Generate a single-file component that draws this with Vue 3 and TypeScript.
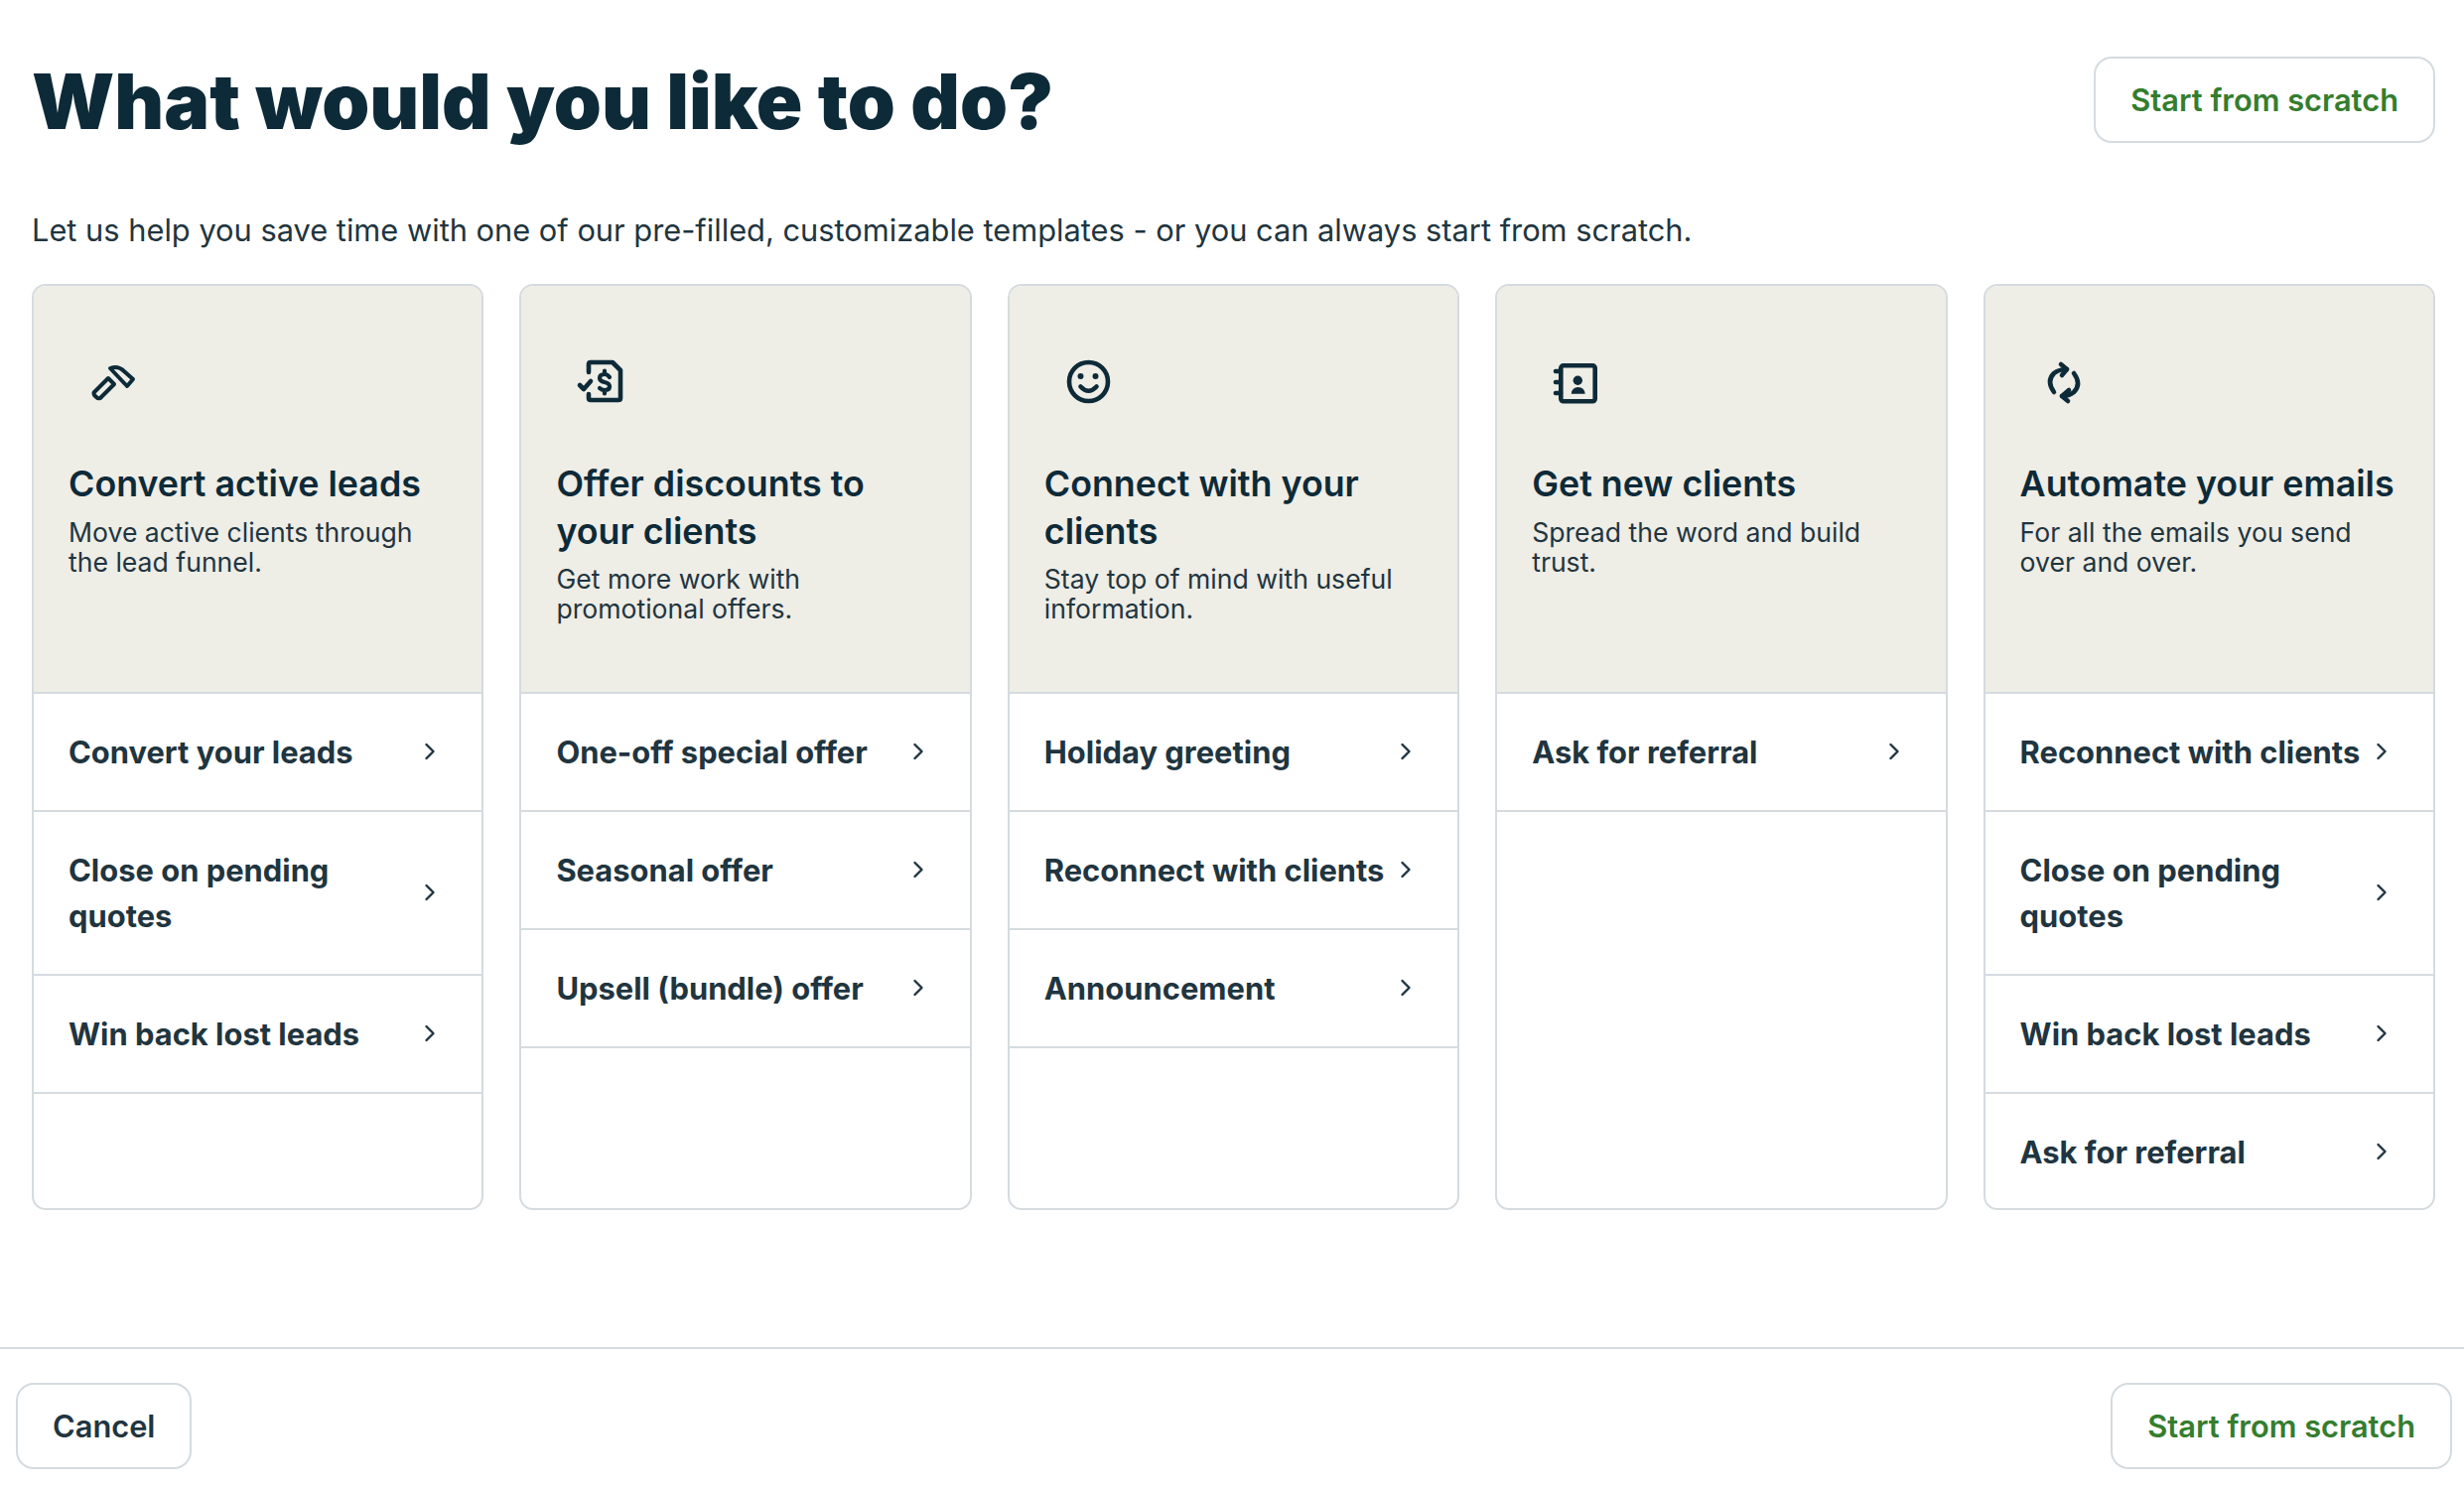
<script setup lang="ts">
interface Card {
  title: string
  sub: string
  icon: string
  items: string[]
}
const cards: Card[] = [
  { title: 'Convert active leads', sub: 'Move active clients through the lead funnel.', icon: 'hammer', items: ['Convert your leads', 'Close on pending quotes', 'Win back lost leads'] },
  { title: 'Offer discounts to your clients', sub: 'Get more work with promotional offers.', icon: 'doc', items: ['One-off special offer', 'Seasonal offer', 'Upsell (bundle) offer'] },
  { title: 'Connect with your clients', sub: 'Stay top of mind with useful information.', icon: 'smile', items: ['Holiday greeting', 'Reconnect with clients', 'Announcement'] },
  { title: 'Get new clients', sub: 'Spread the word and build trust.', icon: 'contact', items: ['Ask for referral'] },
  { title: 'Automate your emails', sub: 'For all the emails you send over and over.', icon: 'sync', items: ['Reconnect with clients', 'Close on pending quotes', 'Win back lost leads', 'Ask for referral'] },
]
</script>

<template>
  <div class="page">
    <main class="main">
      <header class="top">
        <h1>What would you like to do?</h1>
        <button class="btn green">Start from scratch</button>
      </header>
      <p class="intro">Let us help you save time with one of our pre-filled, customizable templates - or you can always start from scratch.</p>
      <div class="cards">
        <section v-for="card in cards" :key="card.title" class="card">
          <div class="head">
            <svg class="icon" viewBox="0 0 86 86" fill="none" stroke="#0d2a38" stroke-width="4.6" stroke-linecap="round" stroke-linejoin="round">
              <g v-if="card.icon === 'hammer'">
                <path d="M25 51 L39 37 L45 43 L31 57 Q29 58 27 56 L25 54 Q24 52 25 51 Z" stroke-width="4" />
                <path d="M41 27 Q49 24 55 30 L64 38 L58 45 Z" stroke-width="4" />
              </g>
              <g v-else-if="card.icon === 'doc'">
                <path d="M32 31 V23 Q32 21 34 21 H56 L64 29 V57 Q64 59 62 59 H34 Q32 59 32 57 V53" />
                <path d="M23 44 L27 48 L34 40" />
                <path d="M53 36 Q51 33 48 33 Q43 33 43 37 Q43 40 48 41 Q53 42 53 45.5 Q53 49 48 49 Q45 49 43 47 M48 29.5 V33 M48 49 V52.5" stroke-width="4.2" />
              </g>
              <g v-else-if="card.icon === 'smile'">
                <circle cx="43.5" cy="40.5" r="19.5" />
                <path d="M35.5 45.5 Q43.5 54 51.5 45.5" />
                <circle cx="35.5" cy="35" r="3" fill="#0d2a38" stroke="none" />
                <circle cx="50.5" cy="35" r="3" fill="#0d2a38" stroke="none" />
              </g>
              <g v-else-if="card.icon === 'contact'">
                <rect x="28.3" y="24.3" width="34.4" height="36" rx="2.5" />
                <path d="M23 30 H28 M23 41 H28 M23 52 H28" />
                <circle cx="45.3" cy="39.3" r="4.7" fill="#0d2a38" stroke="none" />
                <path d="M38.7 52.7 Q39.5 46 45.7 46 Q51.9 46 52.7 52.7 Z" fill="#0d2a38" stroke="none" />
              </g>
              <g v-else>
                <path d="M33 51 Q25 40 33 32 Q38 28 46 28" />
                <path d="M40 23 L46 28 L41 34" />
                <path d="M53 32 Q61 43 53 51 Q48 55 41 55" />
                <path d="M48 49 L41 55 L47 60" />
              </g>
            </svg>
            <h2>{{ card.title }}</h2>
            <p>{{ card.sub }}</p>
          </div>
          <ul class="rows">
            <li v-for="item in card.items" :key="item" class="row">
              <span>{{ item }}</span>
              <svg class="chev" viewBox="0 0 12 18" fill="none" stroke="#1f3540" stroke-width="2.4" stroke-linecap="round" stroke-linejoin="round"><path d="M2.5 2 L9.5 9 L2.5 16" /></svg>
            </li>
          </ul>
        </section>
      </div>
    </main>
    <footer class="foot">
      <button class="btn dark">Cancel</button>
      <button class="btn green">Start from scratch</button>
    </footer>
  </div>
</template>

<style scoped>
.page {
  width: 2482px;
  height: 1502px;
  display: flex;
  flex-direction: column;
  font-family: Inter, "Liberation Sans", sans-serif;
  color: #1f3540;
  background: #fff;
  overflow: hidden;
}
.main {
  flex: 1;
  padding: 57px 29px 0 32px;
}
.top {
  display: flex;
  justify-content: space-between;
  align-items: center;
  height: 87px;
}
h1 {
  margin: 0;
  padding-top: 3px;
  font-family: Inter, sans-serif;
  font-weight: 900;
  font-size: 77px;
  line-height: 87px;
  color: #0d2a38;
}
.intro {
  margin: 64px 0 0;
  font-size: 30.8px;
  line-height: 48px;
}
.cards {
  margin-top: 30px;
  display: grid;
  grid-template-columns: repeat(5, 1fr);
  gap: 36px;
}
.card {
  height: 933px;
  box-sizing: border-box;
  border: 2px solid #d5dbdf;
  border-radius: 14px;
  overflow: hidden;
}
.head {
  height: 411px;
  box-sizing: border-box;
  background: #eeede6;
  padding: 56px 35px 0;
  border-bottom: 2px solid #d5dbdf;
}
.icon {
  display: block;
  width: 86px;
  height: 86px;
  margin-left: 1px;
}
h2 {
  margin: 34px 0 0;
  font-size: 35.8px;
  line-height: 47.5px;
  font-weight: 600;
  color: #0d2a38;
}
.head p {
  margin: 9px 0 0;
  font-size: 26.6px;
  line-height: 30px;
}
.rows {
  list-style: none;
  margin: 0;
  padding: 0;
}
.row {
  box-sizing: border-box;
  display: flex;
  align-items: center;
  justify-content: space-between;
  gap: 10px;
  padding: 35.5px 46px 35.5px 35px;
  border-bottom: 2px solid #d5dbdf;
  font-size: 30.9px;
  line-height: 46px;
  font-weight: 700;
}
.row:nth-child(4) {
  border-bottom: none;
}
.chev {
  flex: none;
  width: 12px;
  height: 18px;
  margin-top: -2px;
}
.foot {
  height: 145px;
  box-sizing: border-box;
  border-top: 2px solid #d5dbdf;
  padding: 34px 12px 0 16px;
  display: flex;
  justify-content: space-between;
  align-items: flex-start;
}
.btn {
  height: 87px;
  padding: 0 35px;
  background: #fff;
  border: 2px solid #d5dbdf;
  border-radius: 18px;
  font-family: Inter, "Liberation Sans", sans-serif;
  font-size: 30.8px;
  font-weight: 600;
}
.green { color: #347d2e; }
.dark { color: #1f3540; }
</style>

<style>
html, body { margin: 0; background: #fff; }
</style>
